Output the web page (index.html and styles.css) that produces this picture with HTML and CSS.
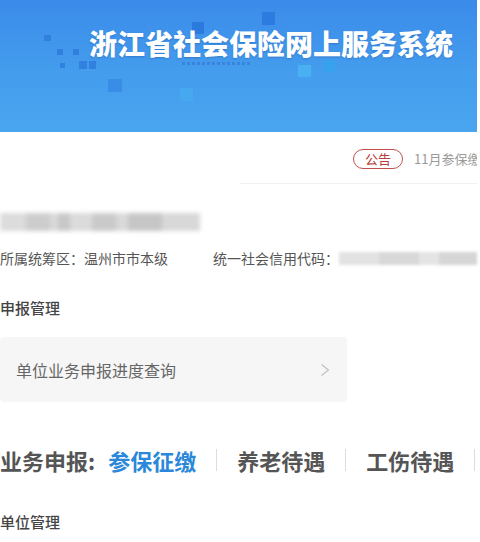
FILE: index.html
```html
<!DOCTYPE html>
<html lang="zh-CN">
<head>
    <meta charset="UTF-8">
    <meta name="viewport" content="width=device-width, initial-scale=1.0">
    <title>浙江省社会保险网上服务系统</title>
    <link rel="stylesheet" href="styles.css">
</head>
<body>
<div class="page">

    <!-- Banner with the system title -->
    <div class="banner">
        <span class="sq sq1"></span>
        <span class="sq sq2"></span>
        <span class="sq sq3"></span>
        <span class="sq sq4"></span>
        <span class="sq sq5"></span>
        <span class="sq sq6"></span>
        <span class="sq sq7"></span>
        <span class="sq sq8"></span>
        <span class="sq sq9"></span>
        <span class="sq sq10"></span>
        <span class="sq sq11"></span>
        <span class="sq sq12"></span>
        <span class="dots"></span>
        <h1 class="banner-title">浙江省社会保险网上服务系统</h1>
    </div>

    <!-- Notice line -->
    <div class="notice">
        <span class="notice-tag">公告</span>
        <span class="notice-text">11月参保缴</span>
    </div>

    <!-- Unit name (blurred) -->
    <div class="unit-name"></div>

    <div class="unit-info">
        <span class="info-item">所属统筹区：温州市市本级</span>
        <span class="info-item info-code">统一社会信用代码：<span class="code-blur"></span></span>
    </div>

    <h2 class="section-title">申报管理</h2>

    <div class="menu-card">
        <span>单位业务申报进度查询</span>
        <svg class="chevron" width="10" height="14" viewBox="0 0 10 14">
            <path d="M1.5 1.5 L8.5 7 L1.5 12.5" fill="none" stroke="#bdbdbd" stroke-width="1.1"/>
        </svg>
    </div>

    <div class="biz-tabs">
        <span class="biz-label">业务申报:</span>
        <span class="biz-tab active">参保征缴</span>
        <span class="biz-tab">养老待遇</span>
        <span class="biz-tab biz-tab-last">工伤待遇</span>
    </div>

    <h2 class="section-title section-last">单位管理</h2>

</div>
</body>
</html>
```

FILE: styles.css
```css
* {
    box-sizing: border-box;
}

html, body {
    margin: 0;
    padding: 0;
    background: #ffffff;
}

body {
    font-family: "Noto Sans CJK SC", "Noto Sans", sans-serif;
    color: #555555;
    overflow: hidden;
}

.page {
    width: 480px;
    height: 542px;
    overflow: hidden;
    padding-right: 3px;
}

/* banner */
.banner {
    position: relative;
    height: 132px;
    background: linear-gradient(180deg, #3b8bea 0%, #449ded 55%, #4aa5ef 100%);
    overflow: hidden;
}

.banner-title {
    position: relative;
    margin: 0;
    padding: 29px 0 0 89px;
    font-size: 28px;
    line-height: 28px;
    font-weight: 900;
    color: #ffffff;
    white-space: nowrap;
    text-shadow: 0 1px 2px rgba(20, 70, 150, 0.35);
}

.sq {
    position: absolute;
    display: block;
    background: #3180e0;
}

.sq1 { left: 44px; top: 35px; width: 7px; height: 6px; }
.sq2 { left: 57px; top: 49px; width: 6px; height: 6px; }
.sq3 { left: 73px; top: 49px; width: 6px; height: 6px; }
.sq4 { left: 60px; top: 63px; width: 5px; height: 5px; }
.sq5 { left: 79px; top: 61px; width: 8px; height: 8px; }
.sq6 { left: 89px; top: 61px; width: 7px; height: 8px; }
.sq7 { left: 108px; top: 79px; width: 14px; height: 13px; background: #3a8de6; }
.sq8 { left: 192px; top: 22px; width: 12px; height: 12px; background: #2d7ade; }
.sq9 { left: 262px; top: 12px; width: 13px; height: 13px; background: #2c7bdf; }
.sq10 { left: 180px; top: 88px; width: 13px; height: 13px; background: #46a9f0; }
.sq11 { left: 298px; top: 65px; width: 13px; height: 12px; background: #49b0f1; }
.sq12 { left: 324px; top: 60px; width: 11px; height: 12px; background: #36a2ee; }

.dots {
    position: absolute;
    left: 182px;
    top: 62px;
    width: 70px;
    height: 3px;
    background: repeating-linear-gradient(90deg, #3a84e0 0 3px, transparent 3px 5px);
}

/* notice */
.notice {
    display: flex;
    align-items: center;
    height: 52px;
    margin-left: 240px;
    padding: 2px 0 0 113px;
    border-bottom: 1px solid #f0f0f0;
    white-space: nowrap;
    overflow: hidden;
}

.notice-tag {
    flex-shrink: 0;
    display: inline-block;
    width: 50px;
    height: 20px;
    line-height: 18px;
    text-align: center;
    border: 1px solid #c0504d;
    border-radius: 10px;
    font-size: 13px;
    color: #b8403c;
}

.notice-text {
    margin-left: 11px;
    font-size: 13px;
    color: #9a9a9a;
}

/* unit */
.unit-name {
    width: 200px;
    height: 18px;
    margin-top: 29px;
    background:
        linear-gradient(90deg,
            #dcdcdc 0 26px, #cdcdcd 26px 50px, #d9d9d9 50px 58px,
            #c8c8c8 58px 70px, #dbdbdb 70px 92px, #cacaca 92px 116px,
            #d9d9d9 116px 128px, #c6c6c6 128px 162px, #d8d8d8 162px 200px);
    filter: blur(2px);
}

.unit-info {
    display: flex;
    margin-top: 17px;
    line-height: 20px;
    font-size: 14px;
    color: #555555;
    white-space: nowrap;
}

.info-code {
    display: flex;
    align-items: center;
    margin-left: 45px;
}

.code-blur {
    display: inline-block;
    width: 138px;
    height: 13px;
    background: linear-gradient(90deg, #e2e2e2 0 40px, #d8d8d8 40px 80px, #e4e4e4 80px 100px, #d6d6d6 100px 138px);
    filter: blur(1.5px);
}

/* sections */
.section-title {
    margin: 29px 0 0;
    line-height: 22px;
    font-size: 15px;
    font-weight: 500;
    color: #444444;
}

.section-last {
    margin-top: 36px;
}

.menu-card {
    display: flex;
    align-items: center;
    justify-content: space-between;
    width: 347px;
    height: 65px;
    margin-top: 18px;
    padding: 0 16px;
    background: #f6f6f6;
    border-radius: 4px;
    font-size: 16px;
    color: #666666;
}

.chevron {
    margin-right: 1px;
}

/* business tabs */
.biz-tabs {
    display: flex;
    align-items: center;
    margin-top: 43px;
    line-height: 30px;
    font-size: 22px;
    font-weight: 700;
    color: #555555;
    white-space: nowrap;
}

.biz-label {
    margin-right: 13px;
}

.biz-tab {
    padding: 0 20px;
    border-left: 1px solid #dddddd;
    line-height: 22px;
}

.biz-tab.active {
    padding-left: 0;
    border-left: none;
    color: #2a87d9;
}

.biz-tab-last {
    border-right: 1px solid #dddddd;
}
```
